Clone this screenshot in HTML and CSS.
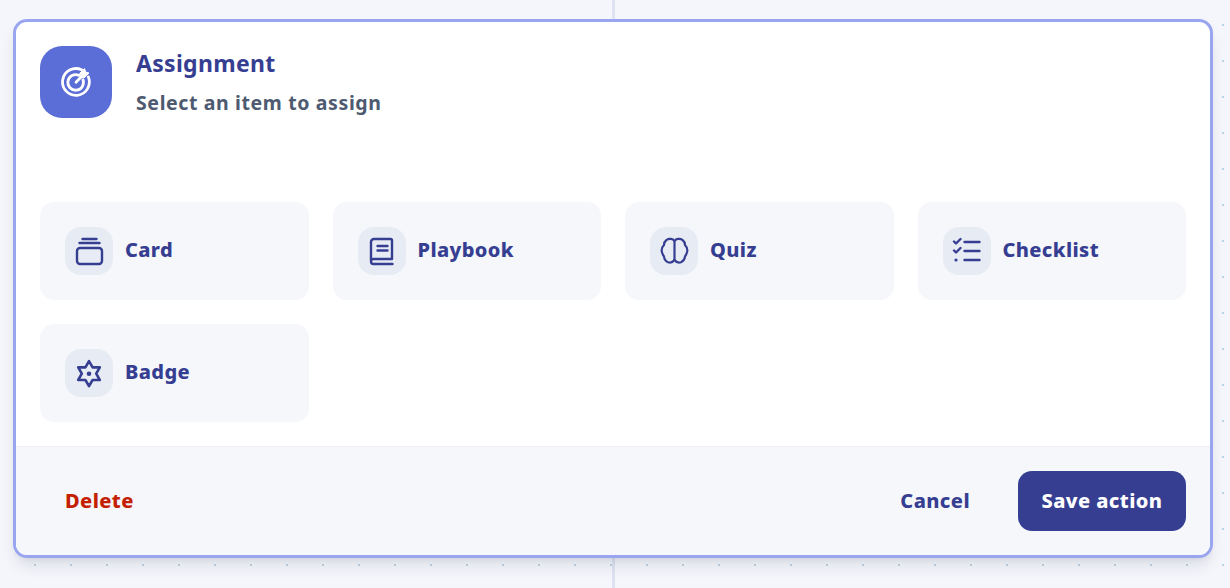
FILE: index.html
```html
<!DOCTYPE html>
<html lang="en">
<head>
<meta charset="utf-8">
<title>Assignment</title>
<link rel="stylesheet" href="styles.css">
</head>
<body>
<div class="dialog">
  <div class="main">
    <header class="head">
      <div class="head-icon">
        <svg viewBox="0 0 32 32" width="32" height="32" fill="none" stroke="#fff" stroke-width="2.800" stroke-linecap="round">
          <path d="M21.600 3.800A13.400 13.400 0 1 0 28.400 11"/>
          <path d="M18.800 9.300A7.800 7.800 0 1 0 23 13.800"/>
          <path d="M16 16.200 22 10"/>
          <path d="M20 7 24.600 2.600l1 3.400 3.400 1-4.200 4.400h-4.200z" fill="#fff" stroke="#fff" stroke-width="1" stroke-linejoin="round"/>
        </svg>
      </div>
      <div class="head-text">
        <div class="title">Assignment</div>
        <div class="subtitle">Select an item to assign</div>
      </div>
    </header>
    <div class="grid">
      <div class="item">
        <div class="item-icon">
          <svg viewBox="0 0 32 32" width="32" height="32" fill="none" stroke="#363e92" stroke-width="2.400" stroke-linecap="round" stroke-linejoin="round">
            <rect x="4" y="13" width="25" height="16" rx="3"/>
            <path d="M6.500 8h20M9.500 4h14"/>
          </svg>
        </div>
        <span class="item-label">Card</span>
      </div>
      <div class="item">
        <div class="item-icon">
          <svg viewBox="0 0 32 32" width="32" height="32" fill="none" stroke="#363e92" stroke-width="2.400" stroke-linecap="round" stroke-linejoin="round">
            <path d="M5 25.500V7a3 3 0 0 1 3-3h16.500a1.500 1.500 0 0 1 1.500 1.500V24H7.500a2.500 2.500 0 0 0 0 5H26.500"/>
            <path d="M11.500 11h10M11.500 15.500h10"/>
          </svg>
        </div>
        <span class="item-label">Playbook</span>
      </div>
      <div class="item">
        <div class="item-icon">
          <svg viewBox="0 0 32 32" width="32" height="32" fill="none" stroke="#363e92" stroke-width="2.200" stroke-linecap="round" stroke-linejoin="round">
            <path d="M16.500 6C15 3.800 11 3 8.500 5 6.500 6.500 6 8 6 10 4 12 3.500 14 3.700 16c.2 2.500 1.300 4 2.300 5.500.2 2.500 1.500 4.500 4 5.700 2.500.8 5-.2 6.500-2.200V6Z"/>
            <path d="M16.500 6C18 3.800 22 3 24.500 5 26.500 6.500 27 8 27 10c2 2 2.500 4 2.300 6-.2 2.500-1.300 4-2.300 5.500-.2 2.500-1.500 4.500-4 5.700-2.500.8-5-.2-6.500-2.200"/>
          </svg>
        </div>
        <span class="item-label">Quiz</span>
      </div>
      <div class="item">
        <div class="item-icon">
          <svg viewBox="0 0 32 32" width="32" height="32" fill="none" stroke="#363e92" stroke-width="2.400" stroke-linecap="round" stroke-linejoin="round">
            <path d="M3 6.500 5 8.500 9.500 4M3 15.500 5 17.500 9.500 13M13.500 7H28.500M13.500 16H28.500M13.500 25H28.500"/>
            <circle cx="5" cy="25" r="1.600" fill="#363e92" stroke="none"/>
          </svg>
        </div>
        <span class="item-label">Checklist</span>
      </div>
      <div class="item">
        <div class="item-icon">
          <svg viewBox="0 0 32 32" width="32" height="32" fill="none" stroke="#363e92" stroke-width="2.600" stroke-linecap="round" stroke-linejoin="round">
            <path d="M16 4.200 19.600 10.400 26.800 10.400 23.200 16.700 26.800 23 19.600 23 16 29.200 12.400 23 5.200 23 8.800 16.700 5.200 10.400 12.400 10.400Z"/>
            <circle cx="16" cy="16.700" r="2.300" fill="#363e92" stroke="none"/>
          </svg>
        </div>
        <span class="item-label">Badge</span>
      </div>
    </div>
  </div>
  <footer class="foot">
    <button class="btn btn-delete" type="button">Delete</button>
    <div class="foot-right">
      <button class="btn btn-cancel" type="button">Cancel</button>
      <button class="btn btn-save" type="button">Save action</button>
    </div>
  </footer>
</div>
</body>
</html>
```
FILE: styles.css
```css
* { box-sizing: border-box; }
html, body { height: 100%; }
body {
  margin: 0;
  overflow: hidden;
  font-family: "Noto Sans", "Lato", sans-serif;
  background-color: #f5f6fb;
  background-image:
    linear-gradient(#dde3f0, #dde3f0),
    radial-gradient(circle at center, #bcd3e6 1.1px, transparent 1.5px);
  background-repeat: no-repeat, repeat;
  background-size: 3px 100%, 36px 36px;
  background-position: 612px 0, 17px 7px;
  padding: 19px 0 0 13px;
}
.dialog {
  width: 1200px;
  height: 539px;
  display: flex;
  flex-direction: column;
  background: #fff;
  border: 3px solid #9aa5f0;
  border-radius: 14px;
  box-shadow: 0 10px 15px -3px rgba(30, 40, 80, .12), 0 4px 6px -4px rgba(30, 40, 80, .1);
  overflow: hidden;
}
.main { flex: 1; padding: 24px; }
.head { display: flex; gap: 24px; height: 72px; margin-bottom: 84px; }
.head-icon {
  width: 72px;
  height: 72px;
  border-radius: 22px;
  background: #5b6dd6;
  display: flex;
  align-items: center;
  justify-content: center;
}
.title { font-size: 23px; font-weight: 700; line-height: 34px; letter-spacing: .3px; color: #363e92; }
.subtitle { font-size: 19.500px; font-weight: 700; line-height: 30px; margin-top: 8px; letter-spacing: .62px; color: #4d5a70; }
.grid { display: grid; grid-template-columns: repeat(4, 1fr); gap: 24px; }
.item {
  height: 98px;
  padding: 25px;
  display: flex;
  align-items: center;
  gap: 12px;
  background: #f5f7fb;
  border-radius: 14px;
}
.item-icon {
  width: 48px;
  height: 48px;
  flex: none;
  border-radius: 16px;
  background: #e6ebf4;
  display: flex;
  align-items: center;
  justify-content: center;
}
.item-label { font-size: 20px; font-weight: 800; line-height: 28px; letter-spacing: .38px; color: #363e92; margin-top: -2px; }
.foot {
  height: 109px;
  flex: none;
  padding: 24px;
  display: flex;
  align-items: center;
  justify-content: space-between;
  background: #f5f7fb;
  border-top: 1px solid #eceff5;
}
.foot-right { display: flex; align-items: center; gap: 24px; }
.btn {
  height: 60px;
  padding: 0 24px 2px;
  border: 0;
  border-radius: 14px;
  background: transparent;
  font: 800 20px "Noto Sans", "Lato", sans-serif;
  letter-spacing: .42px;
}
.btn-delete { color: #c42000; padding: 0 25px 2px; }
.btn-cancel { color: #363e92; }
.btn-save { background: #363e92; color: #fff; width: 168px; padding: 0 0 2px; }
```
